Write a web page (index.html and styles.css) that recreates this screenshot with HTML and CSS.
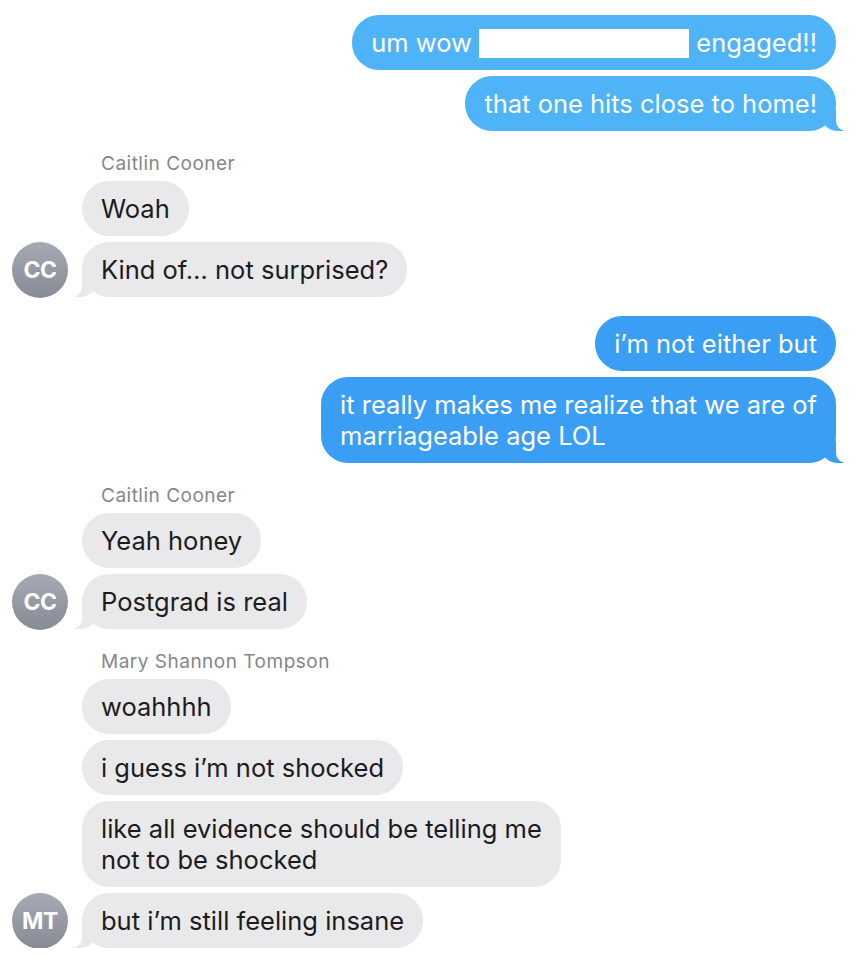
FILE: index.html
```html
<!DOCTYPE html>
<html lang="en">
<head>
  <meta charset="UTF-8">
  <title>Messages</title>
  <meta name="viewport" content="width=device-width, initial-scale=1.0">
  <link rel="stylesheet" href="styles.css">
</head>
<body>
  <div class="thread">

    <div class="out">
      <div class="bubble sent light">um wow <span class="redact"></span> engaged!!</div>
      <div class="bubble sent light tail">that one hits close to home!</div>
    </div>

    <div class="in">
      <div class="name">Caitlin Cooner</div>
      <div class="row"><div class="slot"></div><div class="bubble recv">Woah</div></div>
      <div class="row"><div class="slot avatar">CC</div><div class="bubble recv tail">Kind of… not surprised?</div></div>
    </div>

    <div class="out">
      <div class="bubble sent">i’m not either but</div>
      <div class="bubble sent tail">it really makes me realize that we are of<br>marriageable age LOL</div>
    </div>

    <div class="in">
      <div class="name">Caitlin Cooner</div>
      <div class="row"><div class="slot"></div><div class="bubble recv">Yeah honey</div></div>
      <div class="row"><div class="slot avatar">CC</div><div class="bubble recv tail">Postgrad is real</div></div>
    </div>

    <div class="in">
      <div class="name">Mary Shannon Tompson</div>
      <div class="row"><div class="slot"></div><div class="bubble recv">woahhhh</div></div>
      <div class="row"><div class="slot"></div><div class="bubble recv">i guess i’m not shocked</div></div>
      <div class="row"><div class="slot"></div><div class="bubble recv">like all evidence should be telling me<br>not to be shocked</div></div>
      <div class="row"><div class="slot avatar">MT</div><div class="bubble recv tail">but i’m still feeling insane</div></div>
    </div>

  </div>
</body>
</html>
```

FILE: styles.css
```css
body {
  margin: 0;
  background: #ffffff;
  font-family: 'Inter', 'Liberation Sans', sans-serif;
}

.thread {
  padding: 15px 24px 0 12px;
  display: flex;
  flex-direction: column;
}

.out {
  display: flex;
  flex-direction: column;
  align-items: flex-end;
  gap: 6px;
  margin-top: 19px;
}

.out:first-child {
  margin-top: 0;
}

.in {
  display: flex;
  flex-direction: column;
  gap: 6px;
  margin-top: 22px;
}

.name {
  padding-left: 89px;
  font-size: 19px;
  letter-spacing: 0.5px;
  line-height: 22px;
  color: #86868b;
}

.row {
  display: flex;
  align-items: flex-end;
  gap: 14px;
}

.slot {
  width: 56px;
  flex-shrink: 0;
}

.avatar {
  height: 56px;
  margin-bottom: -1px;
  border-radius: 50%;
  background: linear-gradient(#a6aab4, #868a94);
  color: #fff;
  font-weight: 700;
  font-size: 23px;
  display: flex;
  align-items: center;
  justify-content: center;
  letter-spacing: -0.5px;
}

.bubble {
  position: relative;
  padding: 12px 19px;
  border-radius: 27px;
  font-size: 25.5px;
  line-height: 31px;
  white-space: nowrap;
}

.sent {
  background: #3b9ef5;
  color: #fff;
}

.sent.light {
  background: #4fb4f7;
}

.recv {
  background: #e9e9eb;
  color: #1c1c1e;
}

.redact {
  display: inline-block;
  width: 210px;
  height: 29px;
  background: #fff;
  vertical-align: -6px;
}

/* bubble tails */
.tail::before,
.tail::after {
  content: "";
  position: absolute;
  bottom: 0;
  height: 22px;
}

.sent.tail::before {
  right: -8px;
  width: 22px;
  background: inherit;
  border-bottom-left-radius: 16px 14px;
}

.sent.tail::after {
  right: -14px;
  width: 14px;
  background: #fff;
  border-bottom-left-radius: 10px;
}

.recv.tail::before {
  left: -8px;
  width: 22px;
  background: inherit;
  border-bottom-right-radius: 16px 14px;
}

.recv.tail::after {
  left: -14px;
  width: 14px;
  background: #fff;
  border-bottom-right-radius: 10px;
}
```
